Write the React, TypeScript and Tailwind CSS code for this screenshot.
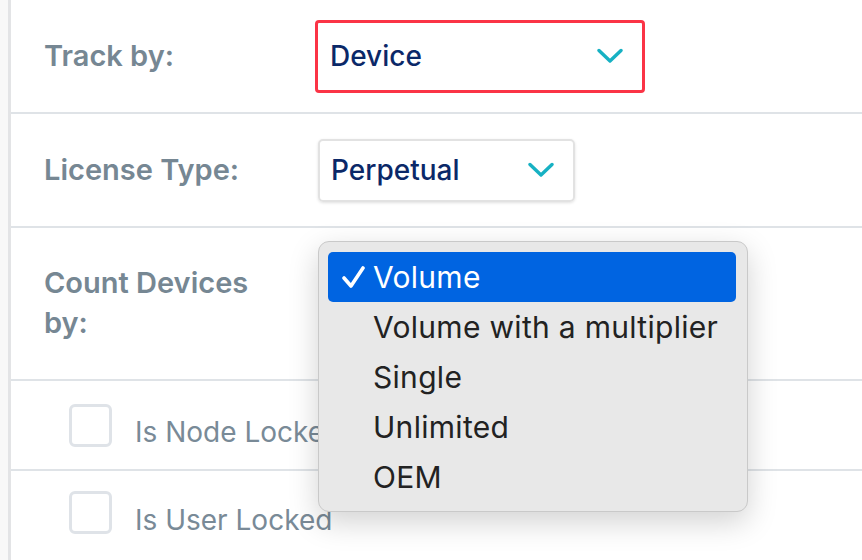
import React from "react";

const Chevron = () => (
  <svg width="26" height="16" viewBox="0 0 26 16" fill="none">
    <polyline points="2,2.5 13,13 24,2.5" stroke="#17b1c3" strokeWidth="3.4" strokeLinecap="round" strokeLinejoin="round" />
  </svg>
);

const Checkbox = ({ label }: { label: string }) => (
  <div className="flex items-center gap-[23px] pl-[58px]">
    <div className="w-[43px] h-[43px] rounded-[6px] border-[3px] border-[#dfe3e8] bg-white" />
    <span className="text-[28px] text-[#798a97] font-normal pt-[14px]">{label}</span>
  </div>
);

const options = ["Volume", "Volume with a multiplier", "Single", "Unlimited", "OEM"];

export default function App() {
  return (
    <div className="w-[862px] h-[560px] flex bg-white overflow-hidden relative" style={{ fontFamily: "Inter, 'Noto Sans', sans-serif" }}>
      <div className="w-[11px] shrink-0 bg-[#f8f8f8] border-r-[3px] border-[#e3e4e6]" />
      <div className="flex-1 flex flex-col">
        <div className="h-[114px] shrink-0 flex items-center border-b-2 border-[#dfe3e7] pl-[33px]">
          <div className="w-[272px] text-[29px] font-semibold text-[#768793]">Track by:</div>
          <div className="w-[330px] h-[73px] border-[3px] border-[#fb3446] rounded-[4px] flex items-center justify-between pl-[12px] pr-[19px] -ml-[1px]">
            <span className="text-[28px] font-medium text-[#0b2868]">Device</span>
            <Chevron />
          </div>
        </div>
        <div className="h-[114px] shrink-0 flex items-center border-b-2 border-[#dfe3e7] pl-[33px]">
          <div className="w-[274px] text-[29px] font-semibold text-[#768793]">License Type:</div>
          <div className="w-[257px] h-[63px] border-2 border-[#e2e2e2] rounded-[5px] shadow-[0_1px_3px_rgba(0,0,0,0.12)] flex items-center justify-between pl-[11px] pr-[19px]">
            <span className="text-[28px] font-medium text-[#0b2868]">Perpetual</span>
            <Chevron />
          </div>
        </div>
        <div className="h-[153px] shrink-0 flex items-center border-b-2 border-[#dfe3e7] pl-[33px]">
          <div className="w-[230px] text-[29px] leading-[40px] font-semibold text-[#768793] pb-[2px]">Count Devices by:</div>
        </div>
        <div className="h-[90px] shrink-0 flex items-center border-b-2 border-[#dfe3e7]">
          <Checkbox label="Is Node Locked" />
        </div>
        <div className="flex-1 flex items-center pb-[6px]">
          <Checkbox label="Is User Locked" />
        </div>
      </div>

      <div className="absolute left-[318px] top-[241px] w-[430px] h-[271px] rounded-[11px] bg-[#e8e8e8] border border-[#c9c9c9] shadow-[0_10px_30px_rgba(0,0,0,0.18)] pt-[10px] pl-[9px] pr-[11px]">
        {options.map((o, i) => (
          <div
            key={o}
            className={
              i === 0
                ? "h-[50px] rounded-[5px] bg-[#0064e1] flex items-center text-white"
                : "h-[50px] flex items-center text-[#222222]"
            }
          >
            <div className="w-[45px] flex justify-center pl-[4px]">
              {i === 0 && (
                <svg width="24" height="24" viewBox="0 0 24 24" fill="none">
                  <path d="M3 13 L10 21 L22 3" stroke="white" strokeWidth="3.6" strokeLinecap="round" strokeLinejoin="round" />
                </svg>
              )}
            </div>
            <span className="text-[30px] tracking-[0.3px]">{o}</span>
          </div>
        ))}
      </div>
    </div>
  );
}
